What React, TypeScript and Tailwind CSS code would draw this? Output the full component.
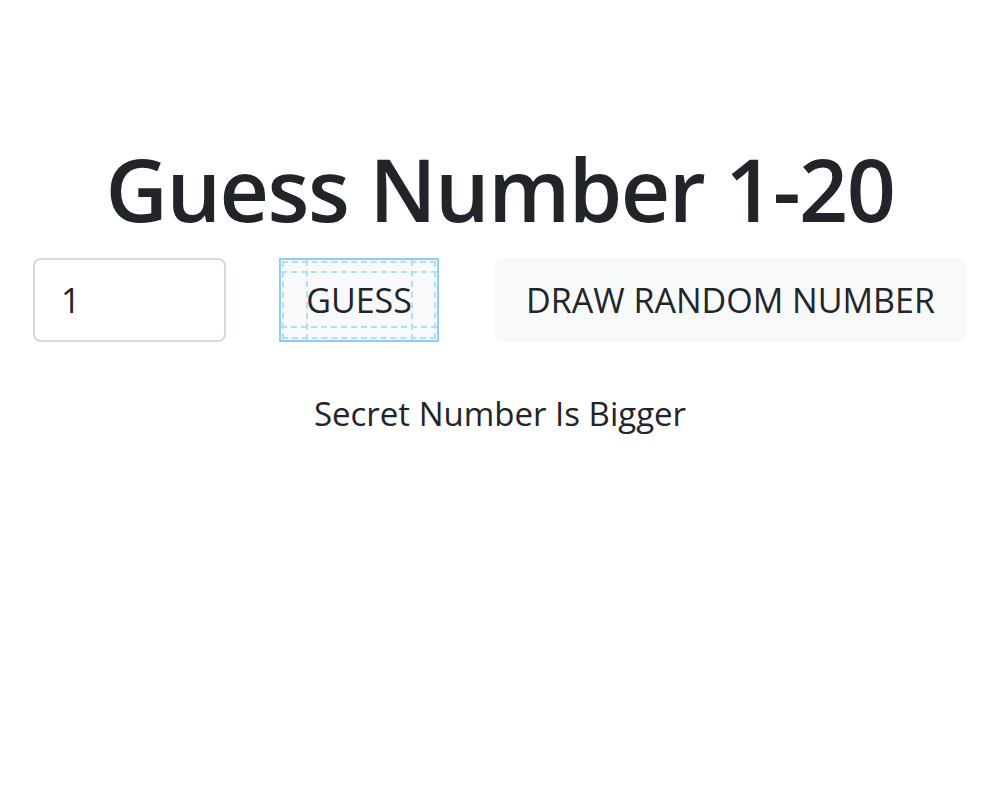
import React from "react";

export default function App() {
  return (
    <div
      className="w-[1000px] h-[800px] bg-white text-[#212529] flex flex-col items-center"
      style={{ fontFamily: '"Open Sans", "Noto Sans", sans-serif' }}
    >
      <h1 className="mt-[134px] text-[86px] leading-[110px] font-semibold tracking-[-1.5px]">
        Guess Number 1-20
      </h1>
      <div className="mt-[14px] w-full px-[33px] flex items-center">
        <div className="w-[193px] h-[84px] border-2 border-[#d3d8de] rounded-[8px] flex items-center pl-[26px] text-[34px]">
          1
        </div>
        <div className="relative ml-[53px] w-[160px] h-[84px] border-2 border-[#8ecdf8] bg-[#f8f9fa] flex items-center justify-center text-[34px]">
          <div className="absolute inset-[1px] border-2 border-dashed border-[#b3ddf8]" />
          <div className="absolute left-0 right-0 top-[11px] border-t-2 border-dashed border-[#b3ddf8]" />
          <div className="absolute left-0 right-0 bottom-[12px] border-t-2 border-dashed border-[#b3ddf8]" />
          <div className="absolute top-0 bottom-0 left-[25px] border-l-2 border-dashed border-[#b3ddf8]" />
          <div className="absolute top-0 bottom-0 right-[24px] border-l-2 border-dashed border-[#b3ddf8]" />
          <span className="relative">GUESS</span>
        </div>
        <div className="ml-[56px] w-[471px] h-[84px] bg-[#f8f9fa] rounded-[8px] flex items-center justify-center text-[34px]">
          DRAW RANDOM NUMBER
        </div>
      </div>
      <p className="mt-[52px] text-[33px] leading-[40px] text-[#212529]">Secret Number Is Bigger</p>
    </div>
  );
}
